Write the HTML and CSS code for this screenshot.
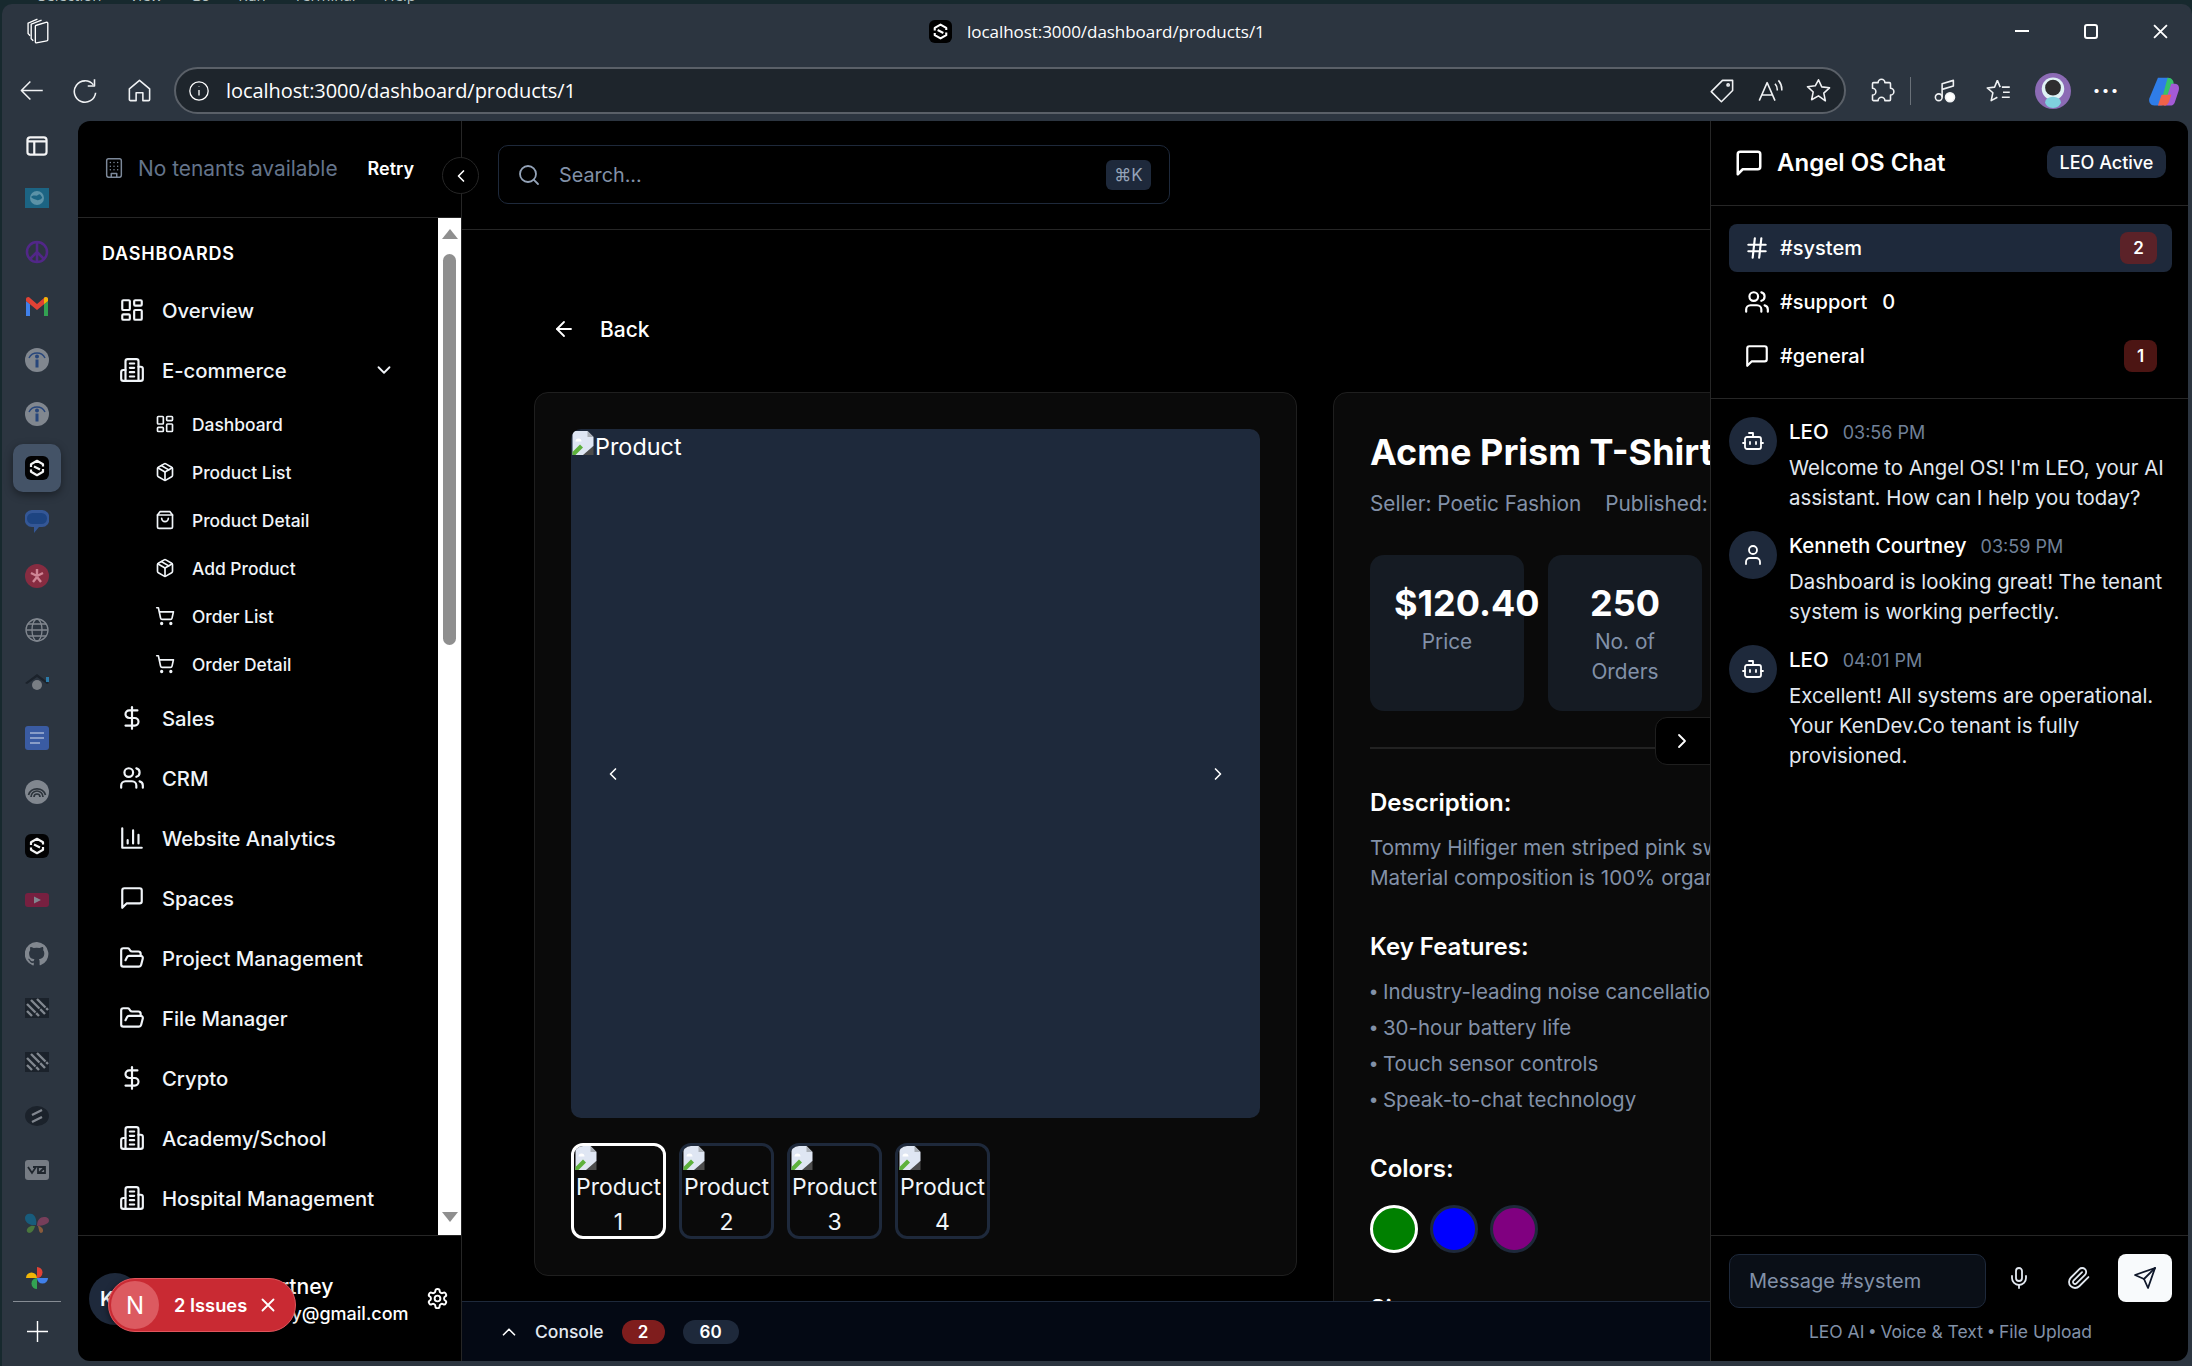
FILE: index.html
```html
<!DOCTYPE html>
<html lang="en">
<head>
    <meta charset="UTF-8">
    <title>localhost:3000/dashboard/products/1</title>
    <link rel="stylesheet" href="styles.css">
</head>
<body>
    <!-- icon sprite -->
    <svg class="sprite" xmlns="http://www.w3.org/2000/svg">
        <symbol id="i-dash" viewBox="0 0 24 24"><rect x="3" y="3" width="7" height="9" rx="1"/><rect x="14" y="3" width="7" height="5" rx="1"/><rect x="14" y="12" width="7" height="9" rx="1"/><rect x="3" y="16" width="7" height="5" rx="1"/></symbol>
        <symbol id="i-building" viewBox="0 0 24 24"><path d="M6 22V4a2 2 0 0 1 2-2h8a2 2 0 0 1 2 2v18Z"/><path d="M6 12H4a2 2 0 0 0-2 2v6a2 2 0 0 0 2 2h2"/><path d="M18 9h2a2 2 0 0 1 2 2v9a2 2 0 0 1-2 2h-2"/><path d="M10 6h4M10 10h4M10 14h4M10 18h4"/></symbol>
        <symbol id="i-package" viewBox="0 0 24 24"><path d="M11 21.73a2 2 0 0 0 2 0l7-4A2 2 0 0 0 21 16V8a2 2 0 0 0-1-1.73l-7-4a2 2 0 0 0-2 0l-7 4A2 2 0 0 0 3 8v8a2 2 0 0 0 1 1.73z"/><path d="M12 22V12"/><path d="m3.3 7 8.7 5 8.7-5"/><path d="m7.5 4.27 9 5.15"/></symbol>
        <symbol id="i-bag" viewBox="0 0 24 24"><path d="M6 2h12l3 4v14a2 2 0 0 1-2 2H5a2 2 0 0 1-2-2V6Z"/><path d="M3 6h18"/><path d="M16 10a4 4 0 0 1-8 0"/></symbol>
        <symbol id="i-cart" viewBox="0 0 24 24"><circle cx="8" cy="21" r="1"/><circle cx="19" cy="21" r="1"/><path d="M2.05 2.05h2l2.66 12.42a2 2 0 0 0 2 1.58h9.78a2 2 0 0 0 1.95-1.57l1.65-7.43H5.12"/></symbol>
        <symbol id="i-dollar" viewBox="0 0 24 24"><path d="M12 2v20"/><path d="M17 5H9.5a3.5 3.5 0 0 0 0 7h5a3.5 3.5 0 0 1 0 7H6"/></symbol>
        <symbol id="i-users" viewBox="0 0 24 24"><path d="M16 21v-2a4 4 0 0 0-4-4H6a4 4 0 0 0-4 4v2"/><circle cx="9" cy="7" r="4"/><path d="M22 21v-2a4 4 0 0 0-3-3.87"/><path d="M16 3.13a4 4 0 0 1 0 7.75"/></symbol>
        <symbol id="i-chart" viewBox="0 0 24 24"><path d="M3 3v18h18"/><path d="M18 17V9M13 17V5M8 17v-3"/></symbol>
        <symbol id="i-msg" viewBox="0 0 24 24"><path d="M21 15a2 2 0 0 1-2 2H7l-4 4V5a2 2 0 0 1 2-2h14a2 2 0 0 1 2 2z"/></symbol>
        <symbol id="i-folder" viewBox="0 0 24 24"><path d="m6 14 1.5-2.9A2 2 0 0 1 9.24 10H20a2 2 0 0 1 1.94 2.5l-1.54 6a2 2 0 0 1-1.95 1.5H4a2 2 0 0 1-2-2V5a2 2 0 0 1 2-2h3.9a2 2 0 0 1 1.69.9l.81 1.2a2 2 0 0 0 1.67.9H18a2 2 0 0 1 2 2v2"/></symbol>
        <symbol id="i-gear" viewBox="0 0 24 24"><path d="M12.22 2h-.44a2 2 0 0 0-2 2v.18a2 2 0 0 1-1 1.73l-.43.25a2 2 0 0 1-2 0l-.15-.08a2 2 0 0 0-2.73.73l-.22.38a2 2 0 0 0 .73 2.73l.15.1a2 2 0 0 1 1 1.72v.51a2 2 0 0 1-1 1.74l-.15.09a2 2 0 0 0-.73 2.73l.22.38a2 2 0 0 0 2.73.73l.15-.08a2 2 0 0 1 2 0l.43.25a2 2 0 0 1 1 1.73V20a2 2 0 0 0 2 2h.44a2 2 0 0 0 2-2v-.18a2 2 0 0 1 1-1.73l.43-.25a2 2 0 0 1 2 0l.15.08a2 2 0 0 0 2.73-.73l.22-.39a2 2 0 0 0-.73-2.73l-.15-.08a2 2 0 0 1-1-1.74v-.5a2 2 0 0 1 1-1.74l.15-.09a2 2 0 0 0 .73-2.73l-.22-.38a2 2 0 0 0-2.73-.73l-.15.08a2 2 0 0 1-2 0l-.43-.25a2 2 0 0 1-1-1.73V4a2 2 0 0 0-2-2z"/><circle cx="12" cy="12" r="3"/></symbol>
        <symbol id="i-hash" viewBox="0 0 24 24"><path d="M4 9h16M4 15h16M10 3 8 21M16 3l-2 18"/></symbol>
        <symbol id="i-bot" viewBox="0 0 24 24"><path d="M12 8V4H8"/><rect x="4" y="8" width="16" height="12" rx="2"/><path d="M2 14h2M20 14h2M15 13v2M9 13v2"/></symbol>
        <symbol id="i-user" viewBox="0 0 24 24"><path d="M19 21v-2a4 4 0 0 0-4-4H9a4 4 0 0 0-4 4v2"/><circle cx="12" cy="7" r="4"/></symbol>
        <symbol id="i-mic" viewBox="0 0 24 24"><path d="M12 2a3 3 0 0 0-3 3v7a3 3 0 0 0 6 0V5a3 3 0 0 0-3-3Z"/><path d="M19 10v2a7 7 0 0 1-14 0v-2"/><path d="M12 19v3"/></symbol>
        <symbol id="i-clip" viewBox="0 0 24 24"><path d="m21.44 11.05-9.19 9.19a6 6 0 0 1-8.49-8.49l8.57-8.57A4 4 0 1 1 18 8.84l-8.59 8.57a2 2 0 0 1-2.83-2.83l8.49-8.48"/></symbol>
        <symbol id="i-send" viewBox="0 0 24 24"><path d="m22 2-7 20-4-9-9-4Z"/><path d="M22 2 11 13"/></symbol>
        <symbol id="i-search" viewBox="0 0 24 24"><circle cx="11" cy="11" r="8"/><path d="m21 21-4.35-4.35"/></symbol>
        <symbol id="i-tenant" viewBox="0 0 24 24"><rect x="4" y="2" width="16" height="20" rx="2"/><path d="M9 22v-4h6v4M8 6h.01M16 6h.01M12 6h.01M12 10h.01M12 14h.01M16 10h.01M16 14h.01M8 10h.01M8 14h.01"/></symbol>
        <symbol id="i-down" viewBox="0 0 24 24"><path d="m6 9 6 6 6-6"/></symbol>
        <symbol id="i-up" viewBox="0 0 24 24"><path d="m18 15-6-6-6 6"/></symbol>
        <symbol id="i-left" viewBox="0 0 24 24"><path d="m15 18-6-6 6-6"/></symbol>
        <symbol id="i-right" viewBox="0 0 24 24"><path d="m9 18 6-6-6-6"/></symbol>
        <symbol id="i-back" viewBox="0 0 24 24"><path d="M19 12H5"/><path d="m12 19-7-7 7-7"/></symbol>
        <symbol id="i-x" viewBox="0 0 24 24"><path d="M18 6 6 18M6 6l12 12"/></symbol>
        <symbol id="i-broken" viewBox="0 0 16 16"><path d="M1 0h10l4 4v6L9 16H1z" fill="#dfe6f3" stroke="none"/><path d="M11 0l4 4h-4z" fill="#a9aeb5" stroke="none"/><path d="M3 7a2 2 0 0 1 4 0z" fill="#fff" stroke="none"/><path d="M1 14l5-5 2 2-5 5H1z" fill="#5db13c" stroke="none"/><path d="M8 16l7-6v6z" fill="#4c4c4c" stroke="none"/></symbol>
        <symbol id="logo" viewBox="0 0 24 24"><rect width="24" height="24" rx="6" fill="#000" stroke="none"/><path d="M6 11V8.200L12 4.800l6 3.400v2.300M18 13v2.800l-6 3.400-6-3.400v-2.300M9 10.500l6 3" fill="none" stroke="#fff" stroke-width="2.200" stroke-linejoin="round"/></symbol>
    </svg>

    <div class="desk-strip">
        <span>Selection</span><span>View</span><span>Go</span><span>Run</span><span>Terminal</span><span>Help</span>
    </div>

    <div class="window">
        <div class="titlebar">
            <svg class="tb-stack" viewBox="0 0 24 26"><path d="M9 7l10-3a1 1 0 0 1 1 1v16a1 1 0 0 1-1 1L9 24a1 1 0 0 1-1-1V8a1 1 0 0 1 1-1z"/><path d="M6 22 4 20V6l10-4"/><path d="M3 17 1 15V5l9-4"/></svg>
            <div class="tb-title">
                <svg class="tb-fav"><use href="#logo"/></svg>
                <span>localhost:3000/dashboard/products/1</span>
            </div>
            <div class="tb-controls">
                <span class="ctl-min"></span>
                <span class="ctl-max"></span>
                <svg class="ctl-close" viewBox="0 0 14 14"><path d="M1 1l12 12M13 1 1 13"/></svg>
            </div>
        </div>

        <div class="toolbar">
            <svg class="tool tool-back" viewBox="0 0 24 24"><path d="M22 12H3M11 4l-8 8 8 8"/></svg>
            <svg class="tool tool-reload" viewBox="0 0 24 24"><path d="M19 7a9.500 9.500 0 1 0 2 7"/><path d="M20 2v6h-6"/></svg>
            <svg class="tool tool-home" viewBox="0 0 24 24"><path d="M3 10.500 12 3l9 7.500V20a1 1 0 0 1-1 1h-5v-7H9v7H4a1 1 0 0 1-1-1z"/></svg>
            <div class="urlbar">
                <svg class="url-info" viewBox="0 0 24 24"><circle cx="12" cy="12" r="10"/><path d="M12 11v6M12 7v.5"/></svg>
                <span class="url-text">localhost:3000/dashboard/products/1</span>
                <svg class="tool tool-tag" viewBox="0 0 24 24"><path d="M21 3v9L11 22 2 13 12 3z"/><circle cx="17" cy="7" r="1"/></svg>
                <svg class="tool tool-read" viewBox="0 0 24 24"><path d="M2 21 9 5l7 16M4.500 16h9"/><path d="M16 6a8 8 0 0 1 2 6M19 3a12 12 0 0 1 3 9"/></svg>
                <svg class="tool tool-star" viewBox="0 0 24 24"><path d="m12 2.500 2.900 6.300 6.900.8-5.100 4.700 1.400 6.900L12 16.800l-6.100 3.400 1.400-6.900-5.100-4.700 6.900-.8z"/></svg>
            </div>
            <svg class="tool tool-ext" viewBox="0 0 24 24"><path d="M9 5a3 3 0 0 1 6 0h4a1 1 0 0 1 1 1v4a3 3 0 0 1 0 6v4a1 1 0 0 1-1 1h-4a3 3 0 0 0-6 0H5a1 1 0 0 1-1-1v-4a3 3 0 0 0 0-6V6a1 1 0 0 1 1-1z"/></svg>
            <span class="tool-sep"></span>
            <svg class="tool tool-media" viewBox="0 0 24 24"><path d="M9 18V6l10-3v5l-10 3"/><circle cx="6" cy="18" r="3"/><circle cx="16" cy="18" r="4" fill="#fff"/></svg>
            <svg class="tool tool-favs" viewBox="0 0 24 24"><path d="M11 3 8.500 9 2 9.700l5 4.300L5.500 21l5.500-3M11 3l2.500 6M15 9h7M16 13.500h6M15 18h7"/></svg>
            <svg class="tool-avatar" viewBox="0 0 32 32"><circle cx="16" cy="16" r="16" fill="#8c6bb5"/><circle cx="16" cy="14" r="10" fill="#dff1f4"/><circle cx="16" cy="13" r="7" fill="#2e2e2e"/><ellipse cx="16" cy="26" rx="7" ry="5" fill="#7fd0de"/></svg>
            <span class="tool-dots">&middot;&middot;&middot;</span>
            <svg class="tool-copilot" viewBox="0 0 28 28"><path d="M9 3h8c2 0 3 1 3 3L14 24c-1 2-3 2-5 2H6c-3 0-5-3-4-6z" fill="#2f7de8"/><path d="M17 3c4 0 5 3 5 5l-5 13c-1 3-3 4-6 4z" fill="#37c26a"/><path d="M20 8h3c3 0 4 3 3 6l-3 9c-1 3-3 3-5 3h-4z" fill="#a45ad6"/><path d="M12 17h8l-2 6c-1 2-2 3-4 3h-5z" fill="#f0624a"/></svg>
        </div>

        <div class="browser">
            <aside class="vtabs">
                <div class="vtab vtab-first">
                    <svg class="vt-panel" viewBox="0 0 24 22"><rect x="1.500" y="1.500" width="21" height="19" rx="3"/><path d="M1.500 6h21M9 6v14.500"/></svg>
                </div>
                <div class="vtab"><svg viewBox="0 0 24 20"><rect width="24" height="20" fill="#1c6787"/><circle cx="12" cy="10" r="7" fill="#5f97ad"/><path d="M6 9c3-3 5 0 7-2s3 1 4 2-3 4-5 3-4-1-6-3z" fill="#1c6787"/></svg></div>
                <div class="vtab"><svg viewBox="0 0 24 24"><circle cx="12" cy="12" r="10" fill="none" stroke="#54278c" stroke-width="2.600"/><path d="M12 2v20M12 12 5 19M12 12l7 7" stroke="#54278c" stroke-width="2.600" fill="none"/></svg></div>
                <div class="vtab"><svg viewBox="0 0 24 20"><path d="M1 5v15h4V8z" fill="#4285f4"/><path d="M19 8v12h4V5z" fill="#34a853"/><path d="M1 5V3c0-2 3-3 4-1l7 6 7-6c1-2 4-1 4 1v2l-11 9z" fill="#ea4335"/><path d="M19 2c1-2 4-1 4 1v2l-4 3z" fill="#fbbc04"/></svg></div>
                <div class="vtab"><svg viewBox="0 0 24 24"><circle cx="12" cy="12" r="12" fill="#868c94"/><path d="M4 10a9 9 0 0 1 16 0" fill="none" stroke="#27477f" stroke-width="1.500"/><circle cx="12" cy="8.500" r="2" fill="#27477f"/><rect x="10.500" y="11.500" width="3" height="8" fill="#27477f"/></svg></div>
                <div class="vtab"><svg viewBox="0 0 24 24"><circle cx="12" cy="12" r="12" fill="#868c94"/><path d="M4 10a9 9 0 0 1 16 0" fill="none" stroke="#27477f" stroke-width="1.500"/><circle cx="12" cy="8.500" r="2" fill="#27477f"/><rect x="10.500" y="11.500" width="3" height="8" fill="#27477f"/></svg></div>
                <div class="vtab vtab-active"><svg><use href="#logo"/></svg></div>
                <div class="vtab"><svg viewBox="0 0 24 24"><path d="M7 0h10a7 7 0 0 1 7 8.500 7 7 0 0 1-7 8.500h-3l-5 6v-6H7A7 7 0 0 1 0 8.500 7 7 0 0 1 7 0z" fill="#35599b"/><rect x="2" y="3" width="20" height="11" rx="5.500" fill="#1d4585"/></svg></div>
                <div class="vtab"><svg viewBox="0 0 24 24"><circle cx="12" cy="12" r="12" fill="#8c2c42"/><path d="M12 5v6M6 9l6 3M18 9l-6 3M8 18l4-5M16 18l-4-5" stroke="#d88a9a" stroke-width="2.400"/></svg></div>
                <div class="vtab"><svg viewBox="0 0 24 24"><circle cx="12" cy="12" r="11" fill="none" stroke="#868c94" stroke-width="1.300"/><ellipse cx="12" cy="12" rx="5" ry="11" fill="none" stroke="#868c94" stroke-width="1.300"/><path d="M1 12h22M3 6h18M3 18h18" stroke="#868c94" stroke-width="1.300"/></svg></div>
                <div class="vtab"><svg viewBox="0 0 24 24"><path d="M0 11 12 2l12 9-2 1-10-7L2 12z" fill="#1b222a"/><circle cx="12" cy="13" r="5" fill="#7e8288"/><rect x="21" y="5" width="3" height="5" fill="#2c7fb0"/></svg></div>
                <div class="vtab"><svg viewBox="0 0 24 24"><rect width="24" height="24" rx="3" fill="#3b5ea8"/><path d="M5 7h14M5 12h14M5 17h10" stroke="#8ea3cf" stroke-width="2.200"/></svg></div>
                <div class="vtab"><svg viewBox="0 0 24 24"><circle cx="12" cy="12" r="12" fill="#868c94"/><path d="M6 17a6 6 0 0 1 12 0M9 17a3 3 0 0 1 6 0M3.500 15a9 9 0 0 1 17 0" fill="none" stroke="#2c333b" stroke-width="1.700"/></svg></div>
                <div class="vtab"><svg><use href="#logo"/></svg></div>
                <div class="vtab"><svg viewBox="0 0 24 16"><rect width="24" height="14" y="1" rx="3" fill="#7c1f41"/><path d="M9 4.500v7l7-3.500z" fill="#868c94"/></svg></div>
                <div class="vtab"><svg viewBox="0 0 24 24"><path d="M12 0a12 12 0 0 0-4 23.400c.6.100.8-.3.800-.6v-2c-3.300.700-4-1.600-4-1.600-.600-1.400-1.400-1.800-1.400-1.800-1-.7.100-.7.100-.7 1.200.1 1.800 1.200 1.800 1.200 1.100 1.800 2.800 1.300 3.500 1 .1-.8.400-1.300.800-1.600-2.700-.3-5.500-1.300-5.500-6 0-1.300.5-2.400 1.200-3.200-.1-.3-.5-1.500.1-3.200 0 0 1-.3 3.300 1.200a11.500 11.500 0 0 1 6 0c2.300-1.500 3.300-1.200 3.300-1.200.6 1.700.2 2.900.1 3.200.8.800 1.200 1.900 1.200 3.200 0 4.600-2.800 5.600-5.500 5.900.4.400.8 1.100.8 2.200v3.300c0 .3.200.7.800.6A12 12 0 0 0 12 0z" fill="#868c94"/></svg></div>
                <div class="vtab"><svg viewBox="0 0 24 20"><rect width="24" height="20" fill="#1b222a"/><path d="M2 6l12 12M6 2l14 14M12 1l11 11M2 13l5 5" stroke="#868c94" stroke-width="2.400" stroke-dasharray="12 1"/></svg></div>
                <div class="vtab"><svg viewBox="0 0 24 20"><rect width="24" height="20" fill="#1b222a"/><path d="M2 6l12 12M6 2l14 14M12 1l11 11M2 13l5 5" stroke="#868c94" stroke-width="2.400" stroke-dasharray="12 1"/></svg></div>
                <div class="vtab"><svg viewBox="0 0 24 20"><ellipse cx="12" cy="10" rx="12" ry="10" fill="#1b222a"/><path d="M7 9l10-5M7 16l10-5" stroke="#868c94" stroke-width="2.400"/></svg></div>
                <div class="vtab"><svg viewBox="0 0 24 20"><rect width="24" height="20" rx="3" fill="#7b8088"/><path d="M3 7l4 6 4-6h-3M13 7h7v6h-7zM14 13l6-6" fill="none" stroke="#1f262e" stroke-width="1.800"/></svg></div>
                <div class="vtab"><svg viewBox="0 0 24 22"><path d="M11 12C4 13 0 9 0 5s4-5 7-4 5 6 4 11z" fill="#175f80"/><path d="M12 13c0-6 3-9 7-9s5 2 5 4-5 5-12 5z" fill="#7b3f5c"/><path d="M10 13c-1 4-3 7-6 7-3-1-3-4 0-6s4-1 6-1z" fill="#4b7a3d"/><path d="M13 13c1 3 1 7 3 7s3-3 1-5-3-2-4-2z" fill="#8d5d3b"/></svg></div>
                <div class="vtab"><svg viewBox="0 0 24 24"><path d="M12 12H1a5.500 5.500 0 0 1 11 0z" fill="#fbbc04"/><path d="M12 12V1a5.500 5.500 0 0 1 0 11z" fill="#ea4335"/><path d="M12 12h11a5.500 5.500 0 0 1-11 0z" fill="#4285f4"/><path d="M12 12v11a5.500 5.500 0 0 1 0-11z" fill="#34a853"/></svg></div>
                <div class="vt-divider"></div>
                <svg class="vt-plus" viewBox="0 0 22 22"><path d="M11 0v22M0 11h22"/></svg>
            </aside>

            <div class="page">
                <aside class="sidebar">
                    <div class="tenant">
                        <svg class="ico ico-tenant"><use href="#i-tenant"/></svg>
                        <span class="tenant-empty">No tenants available</span>
                        <span class="tenant-retry">Retry</span>
                    </div>
                    <div class="nav-wrap">
                        <nav class="nav">
                            <div class="nav-label">Dashboards</div>
                            <a class="nav-item"><svg class="ico"><use href="#i-dash"/></svg>Overview</a>
                            <a class="nav-item"><svg class="ico"><use href="#i-building"/></svg>E-commerce<svg class="ico ico-chev"><use href="#i-down"/></svg></a>
                            <a class="nav-sub"><svg class="ico"><use href="#i-dash"/></svg>Dashboard</a>
                            <a class="nav-sub"><svg class="ico"><use href="#i-package"/></svg>Product List</a>
                            <a class="nav-sub"><svg class="ico"><use href="#i-bag"/></svg>Product Detail</a>
                            <a class="nav-sub"><svg class="ico"><use href="#i-package"/></svg>Add Product</a>
                            <a class="nav-sub"><svg class="ico"><use href="#i-cart"/></svg>Order List</a>
                            <a class="nav-sub"><svg class="ico"><use href="#i-cart"/></svg>Order Detail</a>
                            <a class="nav-item"><svg class="ico"><use href="#i-dollar"/></svg>Sales</a>
                            <a class="nav-item"><svg class="ico"><use href="#i-users"/></svg>CRM</a>
                            <a class="nav-item"><svg class="ico"><use href="#i-chart"/></svg>Website Analytics</a>
                            <a class="nav-item"><svg class="ico"><use href="#i-msg"/></svg>Spaces</a>
                            <a class="nav-item"><svg class="ico"><use href="#i-folder"/></svg>Project Management</a>
                            <a class="nav-item"><svg class="ico"><use href="#i-folder"/></svg>File Manager</a>
                            <a class="nav-item"><svg class="ico"><use href="#i-dollar"/></svg>Crypto</a>
                            <a class="nav-item"><svg class="ico"><use href="#i-building"/></svg>Academy/School</a>
                            <a class="nav-item"><svg class="ico"><use href="#i-building"/></svg>Hospital Management</a>
                        </nav>
                        <div class="scrollbar">
                            <span class="sb-up"></span>
                            <span class="sb-thumb"></span>
                            <span class="sb-down"></span>
                        </div>
                    </div>
                    <div class="user">
                        <div class="user-avatar">K</div>
                        <div class="user-info">
                            <div class="user-name">Kenneth Courtney</div>
                            <div class="user-mail">kenneth.courtney@gmail.com</div>
                        </div>
                        <svg class="ico ico-gear"><use href="#i-gear"/></svg>
                    </div>
                </aside>

                <button class="collapse"><svg class="ico"><use href="#i-left"/></svg></button>

                <main class="main">
                    <div class="topbar">
                        <div class="search">
                            <svg class="ico"><use href="#i-search"/></svg>
                            <span class="search-text">Search...</span>
                            <kbd class="search-kbd">⌘K</kbd>
                        </div>
                    </div>
                    <div class="content">
                        <a class="back"><svg class="ico"><use href="#i-back"/></svg>Back</a>
                        <div class="product">
                            <section class="card">
                                <div class="gallery">
                                    <div class="broken"><svg class="broken-ico"><use href="#i-broken"/></svg>Product</div>
                                    <svg class="ico gal-prev"><use href="#i-left"/></svg>
                                    <svg class="ico gal-next"><use href="#i-right"/></svg>
                                </div>
                                <div class="thumbs">
                                    <div class="thumb thumb-on"><svg class="broken-ico"><use href="#i-broken"/></svg> Product 1</div>
                                    <div class="thumb"><svg class="broken-ico"><use href="#i-broken"/></svg> Product 2</div>
                                    <div class="thumb"><svg class="broken-ico"><use href="#i-broken"/></svg> Product 3</div>
                                    <div class="thumb"><svg class="broken-ico"><use href="#i-broken"/></svg> Product 4</div>
                                </div>
                            </section>
                            <section class="card">
                                <h1 class="p-title">Acme Prism T-Shirt</h1>
                                <div class="p-meta"><span>Seller: Poetic Fashion</span><span>Published: 12 Oct, 2024</span></div>
                                <div class="stats">
                                    <div class="stat"><div class="stat-val">$120.40</div><div class="stat-lbl">Price</div></div>
                                    <div class="stat"><div class="stat-val">250</div><div class="stat-lbl">No. of Orders</div></div>
                                </div>
                                <div class="p-rule">
                                    <button class="stats-next"><svg class="ico"><use href="#i-right"/></svg></button>
                                </div>
                                <h2 class="p-head">Description:</h2>
                                <p class="p-text">Tommy Hilfiger men striped pink sweatshirt. Best for winter days.<br>Material composition is 100% organic cotton.</p>
                                <h2 class="p-head">Key Features:</h2>
                                <ul class="p-list">
                                    <li><span class="dot">•</span> Industry-leading noise cancellation</li>
                                    <li><span class="dot">•</span> 30-hour battery life</li>
                                    <li><span class="dot">•</span> Touch sensor controls</li>
                                    <li><span class="dot">•</span> Speak-to-chat technology</li>
                                </ul>
                                <h2 class="p-head">Colors:</h2>
                                <div class="swatches">
                                    <span class="swatch swatch-on swatch-green"></span>
                                    <span class="swatch swatch-blue"></span>
                                    <span class="swatch swatch-purple"></span>
                                </div>
                                <h2 class="p-head p-head-sizes">Sizes:</h2>
                            </section>
                        </div>
                    </div>
                    <div class="console">
                        <svg class="ico"><use href="#i-up"/></svg>
                        <span class="console-name">Console</span>
                        <span class="pill pill-red">2</span>
                        <span class="pill pill-slate">60</span>
                    </div>
                </main>

                <aside class="chat">
                    <div class="chat-head">
                        <svg class="ico"><use href="#i-msg"/></svg>
                        <span class="chat-title">Angel OS Chat</span>
                        <span class="chat-status">LEO Active</span>
                    </div>
                    <div class="channels">
                        <div class="channel channel-on"><svg class="ico"><use href="#i-hash"/></svg>#system<span class="ch-badge ch-badge-soft">2</span></div>
                        <div class="channel"><svg class="ico"><use href="#i-users"/></svg>#support<span class="ch-zero">0</span></div>
                        <div class="channel"><svg class="ico"><use href="#i-msg"/></svg>#general<span class="ch-badge">1</span></div>
                    </div>
                    <div class="messages">
                        <div class="msg">
                            <div class="msg-avatar"><svg class="ico"><use href="#i-bot"/></svg></div>
                            <div class="msg-body">
                                <div class="msg-top"><span class="msg-name">LEO</span><span class="msg-time">03:56 PM</span></div>
                                <div class="msg-text">Welcome to Angel OS! I'm LEO, your AI assistant. How can I help you today?</div>
                            </div>
                        </div>
                        <div class="msg">
                            <div class="msg-avatar"><svg class="ico"><use href="#i-user"/></svg></div>
                            <div class="msg-body">
                                <div class="msg-top"><span class="msg-name">Kenneth Courtney</span><span class="msg-time">03:59 PM</span></div>
                                <div class="msg-text">Dashboard is looking great! The tenant system is working perfectly.</div>
                            </div>
                        </div>
                        <div class="msg">
                            <div class="msg-avatar"><svg class="ico"><use href="#i-bot"/></svg></div>
                            <div class="msg-body">
                                <div class="msg-top"><span class="msg-name">LEO</span><span class="msg-time">04:01 PM</span></div>
                                <div class="msg-text">Excellent! All systems are operational. Your KenDev.Co tenant is fully provisioned.</div>
                            </div>
                        </div>
                    </div>
                    <div class="compose">
                        <div class="compose-row">
                            <div class="compose-input">Message #system</div>
                            <button class="compose-btn"><svg class="ico"><use href="#i-mic"/></svg></button>
                            <button class="compose-btn"><svg class="ico"><use href="#i-clip"/></svg></button>
                            <button class="compose-send"><svg class="ico"><use href="#i-send"/></svg></button>
                        </div>
                        <div class="compose-note">LEO AI <span class="dot">•</span> Voice &amp; Text <span class="dot">•</span> File Upload</div>
                    </div>
                </aside>

                <div class="issues">
                    <span class="issues-n">N</span>
                    <span class="issues-text">2 Issues</span>
                    <svg class="ico"><use href="#i-x"/></svg>
                </div>
            </div>
        </div>
    </div>
</body>
</html>
```

FILE: styles.css
```css
*{
    margin: 0;
    padding: 0;
    box-sizing: border-box;
}
html,body{
    width: 2192px;
    height: 1366px;
    overflow: hidden;
}
body{
    background: #17292e;
    font-family: "Inter", "Liberation Sans", sans-serif;
    color: #fff;
}
svg{
    display: block;
}
button{
    border: 0;
    background: none;
    color: inherit;
    font: inherit;
}
.sprite{
    width: 0;
    height: 0;
    position: absolute;
}
.ico{
    width: 26px;
    height: 26px;
    flex: none;
    fill: none;
    stroke: currentColor;
    stroke-width: 2;
    stroke-linecap: round;
    stroke-linejoin: round;
}
.dot{
    font-family: "Liberation Sans", sans-serif;
}

/* what shows of the desktop behind the browser */
.desk-strip{
    height: 4px;
    overflow: hidden;
    display: flex;
    gap: 28px;
    padding-left: 38px;
    font: 15px/4px "Open Sans", sans-serif;
    color: #b8c4c4;
}
.desk-strip span{
    margin-top: -7px;
}

/* browser window */
.window{
    height: 1362px;
    margin-left: 2px;
    background: #2c3540;
    border-radius: 10px 10px 0 0;
    display: flex;
    flex-direction: column;
}
.titlebar{
    height: 57px;
    flex: none;
    display: flex;
    align-items: center;
    padding-bottom: 3px;
    position: relative;
}
.tb-stack{
    width: 25px;
    height: 27px;
    margin-left: 25px;
    fill: none;
    stroke: #fff;
    stroke-width: 1.300;
}
.tb-title{
    margin-left: 877px;
    display: flex;
    align-items: center;
    gap: 15px;
    font: 17px "Open Sans", sans-serif;
    letter-spacing: -0.05px;
}
.tb-fav{
    width: 23px;
    height: 23px;
}
.tb-controls{
    margin-left: auto;
    display: flex;
    align-items: center;
    gap: 55px;
    padding-right: 24px;
}
.ctl-min{
    width: 14px;
    height: 2px;
    background: #fff;
}
.ctl-max{
    width: 14px;
    height: 15px;
    border: 2px solid #fff;
    border-radius: 3px;
}
.ctl-close{
    width: 15px;
    height: 15px;
    fill: none;
    stroke: #fff;
    stroke-width: 1.700;
}
.toolbar{
    height: 60px;
    flex: none;
    display: flex;
    align-items: center;
    padding: 0 0 1px 16px;
}
.tool{
    width: 27px;
    height: 27px;
    flex: none;
    fill: none;
    stroke: #f0f2f4;
    stroke-width: 1.400;
    stroke-linejoin: round;
}
.tool-reload{
    margin-left: 27px;
}
.tool-home{
    margin-left: 27px;
}
.urlbar{
    width: 1672px;
    height: 47px;
    margin-left: 21px;
    background: #1e252c;
    border: 2px solid #5a6068;
    border-radius: 24px;
    display: flex;
    align-items: center;
    padding: 0 12px 0 12px;
}
.url-info{
    width: 22px;
    height: 22px;
    fill: none;
    stroke: #fff;
    stroke-width: 1.400;
}
.url-text{
    margin-left: 16px;
    font: 20px "Open Sans", sans-serif;
    letter-spacing: -0.07px;
}
.tool-tag{
    margin-left: auto;
}
.tool-read{
    margin-left: 21px;
}
.tool-star{
    margin-left: 21px;
}
.tool-ext{
    margin-left: 22px;
}
.tool-sep{
    width: 1px;
    height: 28px;
    margin-left: 15px;
    background: #6a7179;
}
.tool-media{
    margin-left: 21px;
}
.tool-favs{
    margin-left: 26px;
}
.tool-avatar{
    width: 36px;
    height: 36px;
    margin-left: 23px;
}
.tool-dots{
    width: 40px;
    margin-left: 15px;
    text-align: center;
    font-size: 24px;
    font-weight: 700;
    letter-spacing: 1px;
    line-height: 24px;
}
.tool-copilot{
    width: 34px;
    height: 34px;
    margin-left: 21px;
}
.browser{
    flex: 1;
    min-height: 0;
    display: flex;
    padding: 0 4px 5px 0;
}

/* vertical tabs */
.vtabs{
    width: 76px;
    flex: none;
    display: flex;
    flex-direction: column;
    align-items: center;
    padding-right: 6px;
}
.vtab{
    width: 48px;
    height: 54px;
    flex: none;
    display: flex;
    align-items: center;
    justify-content: center;
    opacity: 0.95;
}
.vtab svg{
    width: 24px;
    height: 24px;
}
.vtab-first{
    height: 50px;
}
.vtabs .vt-panel{
    width: 22px;
    height: 20px;
    fill: none;
    stroke: #fff;
    stroke-width: 2.400;
}
.vtab-active{
    height: 48px;
    margin: 3px 0;
    background: #46556a;
    border-radius: 10px;
    box-shadow: 0 3px 8px rgba(0,0,0,0.4);
}
.vt-divider{
    width: 48px;
    height: 1px;
    flex: none;
    margin-top: -4px;
    background: #868c94;
}
.vt-plus{
    width: 21px;
    height: 21px;
    margin-top: 19px;
    fill: none;
    stroke: #fff;
    stroke-width: 1.500;
}

/* app */
.page{
    flex: 1;
    min-width: 0;
    display: flex;
    background: #000;
    border-radius: 12px;
    overflow: hidden;
    position: relative;
}
.sidebar{
    width: 384px;
    flex: none;
    display: flex;
    flex-direction: column;
    border-right: 1px solid #262626;
}
.tenant{
    height: 97px;
    flex: none;
    display: flex;
    align-items: center;
    padding: 0 0 2px 25px;
    border-bottom: 1px solid #262626;
}
.ico-tenant{
    width: 22px;
    height: 22px;
    color: #7c8899;
    stroke-width: 1.600;
}
.tenant-empty{
    margin-left: 13px;
    font-size: 20.900px;
    color: #64748b;
}
.tenant-retry{
    margin-left: 30px;
    font-size: 18px;
    font-weight: 600;
}
.nav-wrap{
    flex: 1;
    min-height: 0;
    display: flex;
}
.nav{
    flex: 1;
    min-width: 0;
    padding-top: 24px;
    overflow: hidden;
}
.nav-label{
    height: 24px;
    margin: 0 0 14px 24px;
    font-size: 18px;
    font-weight: 600;
    line-height: 24px;
    text-transform: uppercase;
    letter-spacing: 0.8px;
}
.nav-item{
    height: 60px;
    display: flex;
    align-items: center;
    gap: 17px;
    padding: 0 43px 0 41px;
    font-size: 20.300px;
    font-weight: 500;
    color: #f1f5f9;
}
.nav-sub{
    height: 48px;
    display: flex;
    align-items: center;
    gap: 17px;
    padding-left: 77px;
    font-size: 17.400px;
    font-weight: 500;
    color: #f1f5f9;
}
.nav-sub .ico{
    width: 20px;
    height: 20px;
}
.ico-chev{
    width: 22px;
    height: 22px;
    margin-left: auto;
}
.scrollbar{
    width: 23px;
    flex: none;
    background: #fff;
    display: flex;
    flex-direction: column;
    align-items: center;
    padding: 11px 0 13px;
}
.sb-up,.sb-down{
    width: 0;
    height: 0;
    border-left: 8px solid transparent;
    border-right: 8px solid transparent;
}
.sb-up{
    border-bottom: 10px solid #8f8f8f;
}
.sb-down{
    margin-top: auto;
    border-top: 10px solid #8f8f8f;
}
.sb-thumb{
    width: 13px;
    height: 391px;
    margin-top: 15px;
    background: #8f8f8f;
    border-radius: 7px;
}
.user{
    height: 126px;
    flex: none;
    display: flex;
    align-items: center;
    padding: 0 10px 0 11px;
    border-top: 1px solid #262626;
}
.user-avatar{
    width: 52px;
    height: 52px;
    flex: none;
    background: #1e293b;
    border-radius: 50%;
    display: flex;
    align-items: center;
    padding-left: 11px;
    font-size: 20px;
    font-weight: 600;
}
.user-info{
    margin: 3px 0 0 9px;
    white-space: nowrap;
}
.user-name{
    font-size: 21.200px;
    font-weight: 500;
    line-height: 27px;
}
.user-mail{
    font-size: 18px;
    font-weight: 500;
    line-height: 27px;
}
.ico-gear{
    margin-left: auto;
    width: 23px;
    height: 23px;
    margin-right: 2px;
}
.collapse{
    position: absolute;
    left: 364px;
    top: 36px;
    width: 37px;
    height: 37px;
    background: #000;
    border: 1px solid #262626;
    border-radius: 50%;
    display: flex;
    align-items: center;
    justify-content: center;
}
.collapse .ico{
    width: 20px;
    height: 20px;
}
.issues{
    position: absolute;
    left: 30px;
    bottom: 29px;
    height: 54px;
    width: 188px;
    background: #c92a33;
    border: 1px solid #e0555c;
    border-radius: 27px;
    box-shadow: 0 2px 6px rgba(0,0,0,0.5);
    display: flex;
    align-items: center;
    padding-left: 2px;
}
.issues-n{
    width: 48px;
    height: 48px;
    background: #dc5a60;
    border-radius: 50%;
    display: flex;
    align-items: center;
    justify-content: center;
    font-size: 24px;
}
.issues-text{
    margin-left: 15px;
    font-size: 18.300px;
    font-weight: 600;
}
.issues .ico{
    width: 22px;
    height: 22px;
    margin-left: 10px;
}

/* main column */
.main{
    flex: 1;
    min-width: 0;
    display: flex;
    flex-direction: column;
}
.topbar{
    height: 109px;
    flex: none;
    display: flex;
    align-items: center;
    padding: 24px 0 25px 36px;
    border-bottom: 1px solid #262626;
}
.search{
    width: 672px;
    height: 59px;
    display: flex;
    align-items: center;
    padding: 0 18px;
    border: 1px solid #1e293b;
    border-radius: 10px;
    color: #94a3b8;
}
.search .ico{
    width: 24px;
    height: 24px;
    stroke-width: 1.800;
}
.search-text{
    margin-left: 18px;
    font-size: 19.800px;
    color: #8291a8;
}
.search-kbd{
    margin-left: auto;
    width: 45px;
    height: 30px;
    background: #1e293b;
    border-radius: 6px;
    display: flex;
    align-items: center;
    justify-content: center;
    font: 17px "Inter", "DejaVu Sans", sans-serif;
    color: #94a3b8;
}
.content{
    flex: 1;
    min-height: 0;
    overflow: hidden;
    padding: 84px 0 0 72px;
}
.back{
    height: 30px;
    display: flex;
    align-items: center;
    gap: 24px;
    margin-left: 18px;
    font-size: 21px;
    font-weight: 500;
}
.back .ico{
    width: 24px;
    height: 24px;
    stroke-width: 1.800;
}
.product{
    display: grid;
    grid-template-columns: 763px 764px;
    gap: 36px;
    align-items: start;
    margin-top: 48px;
}
.card{
    background: #0a0a0a;
    border: 1px solid #1f1f1f;
    border-radius: 14px;
    padding: 36px;
}
.gallery{
    height: 689px;
    background: #1e293b;
    border-radius: 10px;
    position: relative;
    overflow: hidden;
}
.broken{
    display: flex;
    padding-top: 1px;
    font-size: 23.400px;
    line-height: 34px;
}
.broken-ico{
    width: 24px;
    height: 24px;
    flex: none;
    margin-top: 1px;
    fill: none;
}
.gal-prev,.gal-next{
    position: absolute;
    top: 50%;
    width: 20px;
    height: 20px;
    margin-top: -10px;
}
.gal-prev{
    left: 32px;
}
.gal-next{
    right: 32px;
}
.thumbs{
    display: flex;
    gap: 13px;
    margin-top: 25px;
}
.thumb{
    width: 95px;
    height: 96px;
    border: 3px solid #1e293b;
    border-radius: 12px;
    font-size: 23px;
    line-height: 35px;
    text-align: center;
    overflow: hidden;
    color: #f1f5f9;
}
.thumb .broken-ico{
    margin-top: 0;
}
.thumb-on{
    border-color: #fff;
}
.p-title{
    font-size: 36px;
    font-weight: 700;
    line-height: 46px;
    white-space: nowrap;
}
.p-meta{
    display: flex;
    gap: 24px;
    margin-top: 14px;
    font-size: 20.800px;
    line-height: 30px;
    color: #8291a8;
    white-space: nowrap;
}
.stats{
    display: flex;
    gap: 24px;
    margin-top: 36px;
}
.stat{
    width: 154px;
    height: 156px;
    padding: 24px;
    background: #151b23;
    border-radius: 14px;
    text-align: center;
}
.stat-val{
    font-size: 36px;
    font-weight: 700;
    line-height: 48px;
    white-space: nowrap;
}
.stat-lbl{
    font-size: 20.800px;
    line-height: 30px;
    color: #8291a8;
}
.p-rule{
    height: 2px;
    margin-top: 36px;
    background: #222;
    position: relative;
}
.stats-next{
    position: absolute;
    left: 285px;
    top: -30px;
    width: 80px;
    height: 48px;
    background: #000;
    border: 1px solid #1f1f1f;
    border-radius: 12px;
    display: flex;
    align-items: center;
    padding-left: 14px;
}
.stats-next .ico{
    width: 24px;
    height: 24px;
    stroke-width: 1.800;
}
.p-head{
    font-size: 24px;
    font-weight: 600;
    line-height: 34px;
    margin-top: 37px;
}
.p-head-sizes{
    margin-top: 39px;
}
.p-text{
    margin-top: 13px;
    font-size: 20.600px;
    line-height: 30px;
    color: #8291a8;
    white-space: nowrap;
}
.p-list{
    list-style: none;
    margin-top: 13px;
    font-size: 20.500px;
    line-height: 30px;
    color: #8291a8;
    white-space: nowrap;
}
.p-list li{
    margin-bottom: 6px;
}
.p-list li:last-child{
    margin-bottom: 0;
}
.swatches{
    display: flex;
    gap: 12px;
    margin-top: 19px;
}
.swatch{
    width: 48px;
    height: 48px;
    border: 3px solid #1e293b;
    border-radius: 50%;
}
.swatch-on{
    border-color: #fff;
}
.swatch-green{
    background: #008000;
}
.swatch-blue{
    background: #0000ff;
}
.swatch-purple{
    background: #800080;
}
.console{
    height: 60px;
    flex: none;
    display: flex;
    align-items: center;
    padding-left: 36px;
    background: #040914;
    border-top: 1px solid #1e293b;
}
.console .ico{
    width: 22px;
    height: 22px;
    stroke-width: 1.800;
}
.console-name{
    margin-left: 15px;
    font-size: 17.500px;
    font-weight: 500;
    color: #e2e8f0;
}
.pill{
    height: 24px;
    border-radius: 12px;
    display: flex;
    align-items: center;
    justify-content: center;
    font-size: 17px;
    font-weight: 600;
}
.pill-red{
    width: 43px;
    margin-left: 18px;
    background: #7f1d1d;
}
.pill-slate{
    width: 56px;
    margin-left: 18px;
    background: #1e293b;
}

/* chat panel */
.chat{
    width: 478px;
    flex: none;
    display: flex;
    flex-direction: column;
    border-left: 1px solid #262626;
}
.chat-head{
    height: 85px;
    flex: none;
    display: flex;
    align-items: center;
    padding: 0 22px 2px 23px;
    border-bottom: 1px solid #262626;
}
.chat-head .ico{
    width: 30px;
    height: 30px;
    margin-top: 2px;
}
.chat-title{
    margin-left: 13px;
    font-size: 24px;
    font-weight: 600;
}
.chat-status{
    margin-left: auto;
    width: 119px;
    height: 32px;
    background: #1e293b;
    border-radius: 10px;
    display: flex;
    align-items: center;
    justify-content: center;
    font-size: 18px;
    font-weight: 500;
}
.channels{
    flex: none;
    display: flex;
    flex-direction: column;
    gap: 6px;
    padding: 18px 16px 18px 18px;
    border-bottom: 1px solid #262626;
}
.channel{
    height: 48px;
    display: flex;
    align-items: center;
    gap: 10px;
    padding: 0 15px 0 15px;
    border-radius: 8px;
    font-size: 20px;
    font-weight: 500;
}
.channel .ico{
    width: 26px;
    height: 26px;
}
.channel-on{
    background: #1e293b;
}
.ch-badge{
    margin-left: auto;
    width: 33px;
    height: 32px;
    background: #4c1513;
    border-radius: 8px;
    display: flex;
    align-items: center;
    justify-content: center;
    font-size: 17px;
    font-weight: 600;
}
.ch-badge-soft{
    width: 37px;
    background: #5b2228;
}
.ch-zero{
    margin-left: 5px;
}
.messages{
    flex: 1;
    min-height: 0;
    display: flex;
    flex-direction: column;
    gap: 18px;
    padding: 18px 16px 0 18px;
}
.msg{
    display: flex;
    gap: 12px;
}
.msg-avatar{
    width: 48px;
    height: 48px;
    flex: none;
    background: #1e293b;
    border-radius: 50%;
    display: flex;
    align-items: center;
    justify-content: center;
}
.msg-avatar .ico{
    width: 24px;
    height: 24px;
    stroke-width: 1.800;
}
.msg-top{
    height: 30px;
    display: flex;
    align-items: baseline;
    gap: 14px;
    line-height: 30px;
}
.msg-name{
    font-size: 20.500px;
    font-weight: 500;
}
.msg-time{
    font-size: 18px;
    color: #708098;
}
.msg-text{
    margin-top: 6px;
    font-size: 20.400px;
    line-height: 30px;
    color: #e2e8f0;
}
.compose{
    height: 126px;
    flex: none;
    padding: 18px 16px 0 18px;
    border-top: 1px solid #262626;
}
.compose-row{
    display: flex;
    align-items: flex-start;
}
.compose-input{
    width: 257px;
    height: 54px;
    background: #0a0f17;
    border: 1px solid #1e293b;
    border-radius: 10px;
    display: flex;
    align-items: center;
    padding-left: 19px;
    font-size: 20px;
    color: #8291a8;
}
.compose-btn{
    width: 54px;
    height: 48px;
    margin-left: 6px;
    display: flex;
    align-items: center;
    justify-content: center;
    color: #e2e8f0;
}
.compose-btn .ico{
    width: 24px;
    height: 24px;
    stroke-width: 1.800;
}
.compose-send{
    width: 54px;
    height: 48px;
    margin-left: 12px;
    background: #f8fafc;
    border-radius: 8px;
    color: #0f172a;
    display: flex;
    align-items: center;
    justify-content: center;
}
.compose-send .ico{
    width: 24px;
    height: 24px;
    stroke-width: 1.800;
}
.compose-note{
    margin-top: 11px;
    font-size: 17.500px;
    line-height: 26px;
    text-align: center;
    color: #8291a8;
}
```
